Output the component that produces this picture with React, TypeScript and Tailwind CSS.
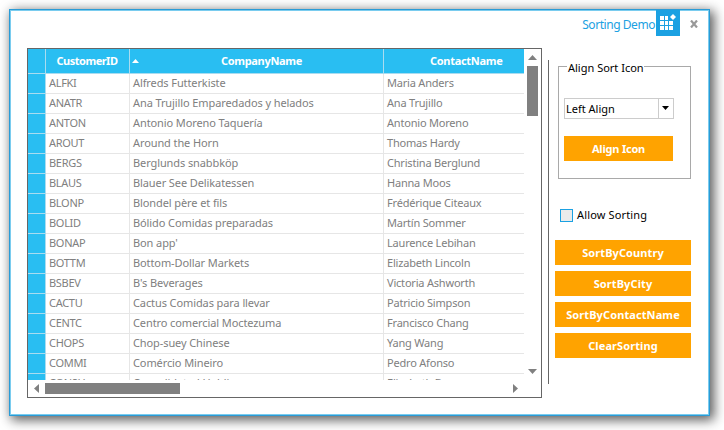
const rows: [string, string, string][] = [
  ["ALFKI", "Alfreds Futterkiste", "Maria Anders"],
  ["ANATR", "Ana Trujillo Emparedados y helados", "Ana Trujillo"],
  ["ANTON", "Antonio Moreno Taquería", "Antonio Moreno"],
  ["AROUT", "Around the Horn", "Thomas Hardy"],
  ["BERGS", "Berglunds snabbköp", "Christina Berglund"],
  ["BLAUS", "Blauer See Delikatessen", "Hanna Moos"],
  ["BLONP", "Blondel père et fils", "Frédérique Citeaux"],
  ["BOLID", "Bólido Comidas preparadas", "Martín Sommer"],
  ["BONAP", "Bon app'", "Laurence Lebihan"],
  ["BOTTM", "Bottom-Dollar Markets", "Elizabeth Lincoln"],
  ["BSBEV", "B's Beverages", "Victoria Ashworth"],
  ["CACTU", "Cactus Comidas para llevar", "Patricio Simpson"],
  ["CENTC", "Centro comercial Moctezuma", "Francisco Chang"],
  ["CHOPS", "Chop-suey Chinese", "Yang Wang"],
  ["COMMI", "Comércio Mineiro", "Pedro Afonso"],
  ["CONSH", "Consolidated Holdings", "Elizabeth Brown"],
];

const cols = "grid grid-cols-[18px_84px_254px_140px]";

function Arrow({ points, w, h, className }: { points: string; w: number; h: number; className?: string }) {
  return (
    <svg width={w} height={h} viewBox={`0 0 ${w} ${h}`} className={`block shrink-0 ${className ?? ""}`}>
      <polygon points={points} fill="currentColor" />
    </svg>
  );
}

function Table() {
  return (
    <div className="h-[331px] w-[496px] shrink-0 overflow-hidden">
      <div className={`${cols} h-[25px] text-[11px] font-bold leading-[24px] text-white`}>
        <div className="border-r border-b border-[#a9dcf0] bg-[#29bef2]" />
        <div className="border-r border-b border-[#a9dcf0] bg-[#29bef2] pr-px text-center tracking-[-0.5px]">CustomerID</div>
        <div className="flex border-r border-b border-[#a9dcf0] bg-[#29bef2]">
          <Arrow w={7} h={4} points="0,4 3.5,0 7,4" className="mt-[10px] ml-[2px]" />
          <span className="flex-1 pl-px text-center tracking-[-0.3px]">CompanyName</span>
        </div>
        <div className="overflow-hidden border-b border-[#a9dcf0] bg-[#29bef2] pl-[46px] tracking-[-0.3px]">ContactName</div>
      </div>
      {rows.map(([id, company, contact]) => (
        <div key={id} className={`${cols} h-5 text-[11px] leading-[18px] whitespace-nowrap text-[#808080]`}>
          <div className="border-r border-b border-[#a9dcf0] bg-[#29bef2]" />
          <div className="border-r border-b border-[#e6e6e6] pl-[3px] tracking-[-0.3px]">{id}</div>
          <div className="border-r border-b border-[#e6e6e6] pl-[3px] tracking-[-0.1px]">{company}</div>
          <div className="border-b border-[#e6e6e6] pl-[3px] tracking-[-0.2px]">{contact}</div>
        </div>
      ))}
    </div>
  );
}

function GridView() {
  return (
    <div className="flex h-[350px] w-[515px] shrink-0 flex-col border border-[#666] text-[#808080]">
      <div className="flex">
        <Table />
        <div className="flex h-[331px] w-[17px] flex-col items-center">
          <Arrow w={9} h={5} points="0,5 4.5,0 9,5" className="mt-[6px]" />
          <div className="mt-[6px] h-[50px] w-[11px] bg-[#808080]" />
          <Arrow w={9} h={5} points="0,0 9,0 4.5,5" className="mt-auto mb-[6px]" />
        </div>
      </div>
      <div className="flex h-[17px] items-center">
        <Arrow w={5} h={9} points="5,0 5,9 0,4.5" className="ml-[6px]" />
        <div className="ml-[6px] h-[11px] w-[135px] bg-[#808080]" />
        <Arrow w={5} h={9} points="0,0 5,4.5 0,9" className="mr-[23px] ml-auto" />
      </div>
    </div>
  );
}

function OrangeButton({ label, className }: { label: string; className?: string }) {
  return (
    <button className={`block h-[25px] w-full bg-[#ffa300] text-center text-[11px] leading-[25px] font-bold text-white ${className ?? "tracking-[0.1px]"}`}>
      {label}
    </button>
  );
}

function SidePanel() {
  return (
    <div className="ml-[6px] flex h-[324px] w-[143px] flex-col border-l border-[#666] pl-[6px] mt-[12px]">
      <fieldset className="ml-[3px] -mt-[2px] h-[121px] w-[133px] border border-[#a9a9a9] pl-[5px]">
        <legend className="ml-[3px] h-4 w-[77px] pl-px text-[11px] leading-[20px] whitespace-nowrap text-black">Align Sort Icon</legend>
        <div className="mt-[24px] flex h-[21px] w-[110px] border border-[#ccc] text-[11px] leading-[20px] text-black">
          <span className="w-[94px] border-r border-[#ccc] pl-px">Left Align</span>
          <Arrow w={7} h={4} points="0,0 7,0 3.5,4" className="mt-[7px] ml-[3px]" />
        </div>
        <div className="mt-[17px] w-[109px]">
          <OrangeButton label="Align Icon" className="tracking-[-0.2px]" />
        </div>
      </fieldset>
      <label className="mt-[30px] ml-[5px] flex h-[13px] items-center text-[11px] tracking-[0.15px] text-black">
        <span className="mr-1 size-[13px] border border-[#1ba1e2] bg-[#ebebeb]" />
        Allow Sorting
      </label>
      <div className="mt-[18px] flex w-[136px] flex-col gap-[6px]">
        <OrangeButton label="SortByCountry" />
        <OrangeButton label="SortByCity" />
        <OrangeButton label="SortByContactName" />
        <OrangeButton label="ClearSorting" />
      </div>
    </div>
  );
}

function TitleBar() {
  return (
    <div className="flex h-[37px] justify-end text-[#1ba1e2]">
      <span className="pt-[5px] text-[12px] leading-[18px] tracking-[-0.45px]">Sorting Demo</span>
      <svg width="24" height="26" viewBox="0 0 24 26" className="-mt-px ml-px block">
        <rect width="24" height="26" fill="#1ba1e2" />
        <g fill="#fff">
          <path d="M4 6h4v4H4zM9 6h3v4H9zM4 11h4v4H4zM9 11h3v4H9zM13 11h4v4h-4zM4 16h4v4H4zM9 16h3v4H9zM13 16h4v4h-4z" />
          <path d="M17 4l3 3-3 3-3-3z" />
        </g>
      </svg>
      <svg width="8" height="8" viewBox="0 0 8 8" className="mt-[9px] mr-[10px] ml-[10px] block">
        <path d="M1 0.5L7 7.5M7 0.5L1 7.5" stroke="#999" strokeWidth="2.2" />
      </svg>
    </div>
  );
}

export default function App() {
  return (
    <div className="h-[430px] w-[724px] overflow-hidden bg-white pt-[9px] pl-[9px] font-['Noto_Sans','Open_Sans',sans-serif]">
      <div className="h-[407px] w-[701px] border border-[#2a9bd6] bg-white shadow-[3px_3px_11px_1px_rgba(0,0,0,0.65)]">
        <div className="h-full border border-[#7accef]">
          <TitleBar />
          <div className="flex pl-4">
            <GridView />
            <SidePanel />
          </div>
        </div>
      </div>
    </div>
  );
}
